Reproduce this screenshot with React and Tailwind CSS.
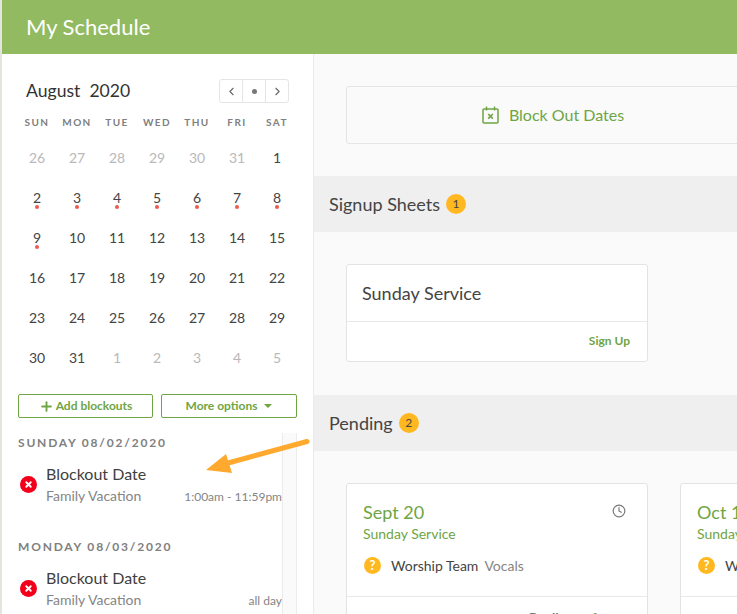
import React from 'react';
import { ChevronLeft, ChevronRight, Plus, X, Clock } from 'lucide-react';

const weekDays = ['SUN', 'MON', 'TUE', 'WED', 'THU', 'FRI', 'SAT'];

const days = [
  [26, 1], [27, 1], [28, 1], [29, 1], [30, 1], [31, 1], [1],
  [2, 0, 1], [3, 0, 1], [4, 0, 1], [5, 0, 1], [6, 0, 1], [7, 0, 1], [8, 0, 1],
  [9, 0, 1], [10], [11], [12], [13], [14], [15],
  [16], [17], [18], [19], [20], [21], [22],
  [23], [24], [25], [26], [27], [28], [29],
  [30], [31], [1, 1], [2, 1], [3, 1], [4, 1], [5, 1],
];

function BlockoutItem({ day, sub, time }) {
  return (
    <div className="h-[104px]">
      <div className="h-[20px] text-[12px] leading-[20px] font-bold tracking-[0.15em] text-[#808080]">{day}</div>
      <div className="flex items-center mt-[10px]">
        <div className="w-[17px] h-[17px] ml-[2px] mb-[2px] rounded-full bg-[#f2001a] flex items-center justify-center shrink-0">
          <X size={9} strokeWidth={5} className="text-white" />
        </div>
        <div className="ml-[9px] flex-1 min-w-0">
          <div className="text-[16px] leading-[22px] text-[#3f3f3f]">Blockout Date</div>
          <div className="flex justify-between items-baseline">
            <span className="text-[14px] leading-[22px] text-[#858585]">{sub}</span>
            <span className="text-[12px] leading-[22px] text-[#858585]">{time}</span>
          </div>
        </div>
      </div>
    </div>
  );
}

function SectionBar({ title, count }) {
  return (
    <div className="h-[56px] bg-[#efefef] pl-[15px] flex items-center gap-[6px]">
      <span className="text-[18px] text-[#444444]">{title}</span>
      <span className="w-[20px] h-[20px] rounded-full bg-[#ffb81f] text-[12px] text-[#444444] flex items-center justify-center">{count}</span>
    </div>
  );
}

function PendingCard({ date }) {
  return (
    <div className="w-[302px] h-[160px] shrink-0 bg-white border border-[#e3e3e3] rounded-[3px]">
      <div className="h-[113px] px-[16px] pt-[15px] border-b border-[#e8e8e8]">
        <div className="flex justify-between">
          <span className="text-[18px] leading-[26px] text-[#6fa544]">{date}</span>
          <Clock size={14} strokeWidth={2} className="text-[#777777] mt-[5px] mr-[5px]" />
        </div>
        <div className="text-[14px] leading-[18px] text-[#6fa544]">Sunday Service</div>
        <div className="flex items-center mt-[12px]">
          <span className="w-[17px] h-[17px] ml-[1px] rounded-full bg-[#ffb81f] text-white text-[13px] font-bold flex items-center justify-center">?</span>
          <span className="ml-[10px] text-[14px] text-[#444444]">Worship Team</span>
          <span className="ml-[6px] text-[14px] text-[#858585]">Vocals</span>
        </div>
      </div>
      <div className="flex justify-end gap-[18px] px-[16px] pt-[12px] text-[13px] font-bold">
        <span className="text-[#777777]">Decline</span>
        <span className="text-[#6fa544]">Accept</span>
      </div>
    </div>
  );
}

export default function App() {
  return (
    <div className="relative w-[737px] h-[614px] overflow-hidden bg-[#e5e5e0] pl-[2px] font-['Lato','Open_Sans',sans-serif]">
      <header className="h-[54px] bg-[#91ba61] pl-[24px] pb-[2px] flex items-center">
        <h1 className="text-[22px] text-white">My Schedule</h1>
      </header>

      <div className="flex h-[560px]">
        {/* Sidebar */}
        <aside className="w-[312px] shrink-0 bg-white border-r border-[#ebebeb] relative">
          <div className="pl-[15px] pr-[16px]">
            <div className="flex items-center justify-between h-[24px] mt-[25px] pl-[9px]">
              <span className="text-[17.6px] text-[#333333] whitespace-pre">August  2020</span>
              <div className="flex h-[24px] border border-[#e5e5e5] rounded-[3px] mr-[8px]">
                <span className="w-[23px] flex items-center justify-center border-r border-[#e5e5e5]">
                  <ChevronLeft size={13} className="text-[#666666]" />
                </span>
                <span className="w-[23px] flex items-center justify-center border-r border-[#e5e5e5]">
                  <span className="w-[5px] h-[5px] rounded-full bg-[#777777]" />
                </span>
                <span className="w-[22px] flex items-center justify-center">
                  <ChevronRight size={13} className="text-[#666666]" />
                </span>
              </div>
            </div>

            <div className="grid grid-cols-7 w-[280px] mt-[11px]">
              {weekDays.map((d) => (
                <div key={d} className="h-[16px] text-center text-[10px] leading-[16px] font-bold tracking-[0.14em] text-[#808080]">{d}</div>
              ))}
            </div>

            <div className="grid grid-cols-7 w-[280px] mt-[7px]">
              {days.map(([n, muted, dot], i) => (
                <div key={i} className={`relative h-[40px] flex items-center justify-center text-[14px] ${muted ? 'text-[#b9b9b9]' : 'text-[#444444]'}`}>
                  {n}
                  {dot && <span className="absolute left-[18px] top-[28px] w-[4px] h-[4px] rounded-full bg-[#f0594f]" />}
                </div>
              ))}
            </div>

            <div className="flex gap-[8px] ml-[1px] mt-[17px]">
              <button className="w-[135px] h-[24px] border border-[#6fa544] rounded-[2px] text-[12px] font-bold text-[#6fa544] flex items-center justify-center gap-[2px]">
                <Plus size={15} strokeWidth={3} />
                Add blockouts
              </button>
              <button className="w-[136px] h-[24px] border border-[#6fa544] rounded-[2px] text-[12px] font-bold text-[#6fa544] flex items-center justify-center gap-[7px]">
                More options
                <span className="w-0 h-0 border-x-[4px] border-x-transparent border-t-[4px] border-t-[#6fa544]" />
              </button>
            </div>
          </div>

          <div className="flex mt-[15px] ml-[16px] h-[181px]">
            <div className="w-[264px] shrink-0 overflow-hidden">
              <BlockoutItem day="SUNDAY 08/02/2020" sub="Family Vacation" time="1:00am - 11:59pm" />
              <BlockoutItem day="MONDAY 08/03/2020" sub="Family Vacation" time="all day" />
            </div>
            <div className="w-[15px] bg-[#fafafa] border-x border-[#ececec]" />
          </div>
        </aside>

        {/* Main column */}
        <main className="flex-1 min-w-0 bg-[#fafafa]">
          <div className="pl-[32px] pt-[32px] pb-[32px]">
            <div className="w-[414px] h-[58px] border border-[#e5e5e5] rounded-[3px] flex items-center justify-center gap-[10px] text-[#6fa544]">
              <svg width="17" height="18" viewBox="0 0 17 18" fill="none" stroke="currentColor" strokeWidth="1.5">
                <rect x="1" y="3" width="15" height="14" rx="1" />
                <path d="M4.5 0.5v4M12.5 0.5v4" />
                <path d="M6.2 8l4.6 4.6M10.8 8l-4.6 4.6" strokeWidth="1.7" />
              </svg>
              <span className="text-[16px]">Block Out Dates</span>
            </div>
          </div>

          <SectionBar title="Signup Sheets" count="1" />

          <div className="pl-[32px] pt-[32px] pb-[33px]">
            <div className="w-[302px] h-[98px] bg-white border border-[#e3e3e3] rounded-[3px]">
              <div className="h-[57px] pl-[15px] flex items-center border-b border-[#e8e8e8] text-[18px] text-[#444444]">Sunday Service</div>
              <div className="h-[39px] pr-[17px] pb-[2px] flex items-center justify-end text-[12px] font-bold text-[#6fa544]">Sign Up</div>
            </div>
          </div>

          <SectionBar title="Pending" count="2" />

          <div className="pl-[32px] pt-[32px] flex gap-[32px]">
            <PendingCard date="Sept 20" />
            <PendingCard date="Oct 18" />
          </div>
        </main>
      </div>

      {/* Annotation arrow */}
      <svg className="absolute left-[200px] top-[435px]" width="115" height="45" viewBox="0 0 115 45">
        <path d="M107 6.5L28 28" stroke="#ffa92e" strokeWidth="5" strokeLinecap="round" fill="none" />
        <path d="M6 35L26 19L32 38Z" fill="#ffa92e" />
      </svg>
    </div>
  );
}
